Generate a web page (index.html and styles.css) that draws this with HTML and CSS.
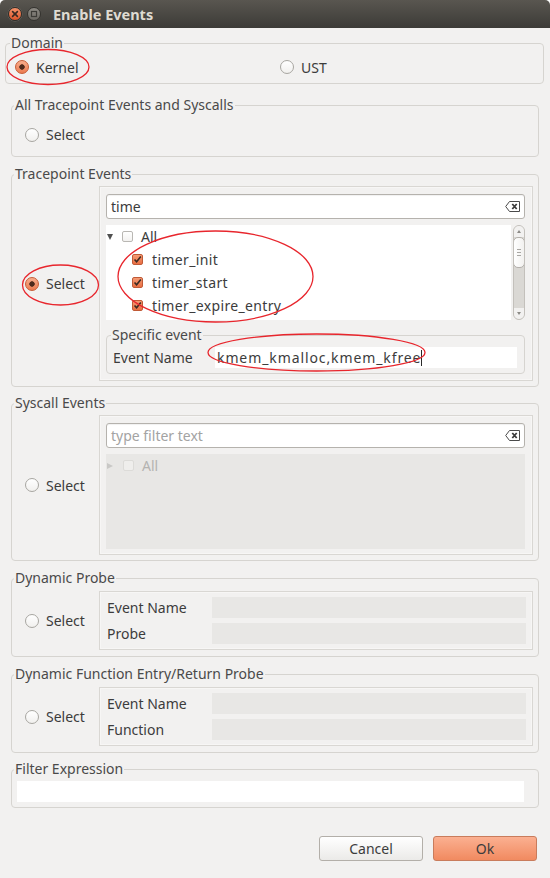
FILE: index.html
```html
<!DOCTYPE html>
<html>
<head>
<meta charset="utf-8">
<title>Enable Events</title>
<link rel="stylesheet" href="styles.css">
</head>
<body>
<div class="window">
  <div class="titlebar">
    <span class="wbtn close"><svg width="14" height="14" viewBox="0 0 14 14"><path d="M4.6 4.6 L9.4 9.4 M9.4 4.6 L4.6 9.4" stroke="#3a2a22" stroke-width="1.6" stroke-linecap="round"/></svg></span>
    <span class="wbtn max"><svg width="14" height="14" viewBox="0 0 14 14"><rect x="4.5" y="4.5" width="5" height="5" fill="none" stroke="#3c3b37" stroke-width="1.2"/></svg></span>
    <span class="title">Enable Events</span>
  </div>

  <div class="content">
    <fieldset class="group domain">
      <legend>Domain</legend>
      <div class="domain-row">
        <label class="radio"><span class="rb on"></span>Kernel</label>
        <label class="radio"><span class="rb"></span>UST</label>
      </div>
    </fieldset>

    <fieldset class="group g-all">
      <legend>All Tracepoint Events and Syscalls</legend>
      <div class="sel-row"><label class="radio"><span class="rb"></span>Select</label></div>
    </fieldset>

    <fieldset class="group g-tp">
      <legend>Tracepoint Events</legend>
      <div class="split">
        <div class="left"><label class="radio"><span class="rb on"></span>Select</label></div>
        <div class="panel tp-panel">
          <div class="search">
            <span class="stext">time</span>
            <svg class="clear" width="15" height="11" viewBox="0 0 15 11"><path d="M4.5 0.5 H14.5 V10.5 H4.5 L0.7 5.5 Z" fill="#fff" stroke="#4a4a4a"/><path d="M7.3 3 L11.7 8 M11.7 3 L7.3 8" stroke="#3c3c3c" stroke-width="1.8"/></svg>
          </div>
          <div class="treewrap">
            <div class="tree">
              <div class="row">
                <span class="tri down"></span>
                <span class="cb"></span>
                <span class="rtext">All</span>
              </div>
              <div class="row child">
                <span class="cb on"><svg width="9" height="9" viewBox="0 0 9 9"><path d="M1.5 4.5 L3.6 6.8 L7.8 1.6" fill="none" stroke="#3a2a22" stroke-width="1.6"/></svg></span>
                <span class="rtext">timer_init</span>
              </div>
              <div class="row child">
                <span class="cb on"><svg width="9" height="9" viewBox="0 0 9 9"><path d="M1.5 4.5 L3.6 6.8 L7.8 1.6" fill="none" stroke="#3a2a22" stroke-width="1.6"/></svg></span>
                <span class="rtext">timer_start</span>
              </div>
              <div class="row child">
                <span class="cb on"><svg width="9" height="9" viewBox="0 0 9 9"><path d="M1.5 4.5 L3.6 6.8 L7.8 1.6" fill="none" stroke="#3a2a22" stroke-width="1.6"/></svg></span>
                <span class="rtext">timer_expire_entry</span>
              </div>
            </div>
            <div class="scrollbar">
              <span class="sarrow up"></span>
              <span class="slider"><i></i><i></i><i></i></span>
              <span class="strough"></span>
              <span class="sarrow down"></span>
            </div>
          </div>
          <fieldset class="sub">
            <legend>Specific event</legend>
            <div class="sub-row">
              <span class="lbl">Event Name</span>
              <div class="field white"><span class="ftext">kmem_kmalloc,kmem_kfree</span><span class="caret"></span></div>
            </div>
          </fieldset>
        </div>
      </div>
    </fieldset>

    <fieldset class="group g-sys">
      <legend>Syscall Events</legend>
      <div class="split">
        <div class="left"><label class="radio"><span class="rb"></span>Select</label></div>
        <div class="panel sys-panel">
          <div class="search">
            <span class="stext ph">type filter text</span>
            <svg class="clear" width="15" height="11" viewBox="0 0 15 11"><path d="M4.5 0.5 H14.5 V10.5 H4.5 L0.7 5.5 Z" fill="#fff" stroke="#4a4a4a"/><path d="M7.3 3 L11.7 8 M11.7 3 L7.3 8" stroke="#3c3c3c" stroke-width="1.8"/></svg>
          </div>
          <div class="tree disabled">
            <div class="row">
              <span class="tri right"></span>
              <span class="cb dis"></span>
              <span class="rtext">All</span>
            </div>
          </div>
        </div>
      </div>
    </fieldset>

    <fieldset class="group g-probe">
      <legend>Dynamic Probe</legend>
      <div class="split">
        <div class="left"><label class="radio"><span class="rb"></span>Select</label></div>
        <div class="panel form-panel">
          <div class="frow"><span class="lbl">Event Name</span><div class="field grey"></div></div>
          <div class="frow"><span class="lbl">Probe</span><div class="field grey"></div></div>
        </div>
      </div>
    </fieldset>

    <fieldset class="group g-probe">
      <legend>Dynamic Function Entry/Return Probe</legend>
      <div class="split">
        <div class="left"><label class="radio"><span class="rb"></span>Select</label></div>
        <div class="panel form-panel">
          <div class="frow"><span class="lbl">Event Name</span><div class="field grey"></div></div>
          <div class="frow"><span class="lbl">Function</span><div class="field grey"></div></div>
        </div>
      </div>
    </fieldset>

    <fieldset class="group g-filter">
      <legend>Filter Expression</legend>
      <div class="filter-body"><div class="field white"></div></div>
    </fieldset>

    <div class="buttons">
      <button class="btn cancel">Cancel</button>
      <button class="btn ok">Ok</button>
    </div>
  </div>

  <svg class="marks" width="550" height="878" viewBox="0 0 550 878">
    <ellipse cx="48" cy="67" rx="41" ry="17.5" fill="none" stroke="#e8262d" stroke-width="1.3"/>
    <ellipse cx="60.5" cy="285" rx="38" ry="20" fill="none" stroke="#e8262d" stroke-width="1.3"/>
    <ellipse cx="215.5" cy="276.5" rx="97.5" ry="45.5" fill="none" stroke="#e8262d" stroke-width="1.3"/>
    <ellipse cx="316.5" cy="352.5" rx="108.5" ry="18.5" fill="none" stroke="#e8262d" stroke-width="1.3"/>
  </svg>
</div>
</body>
</html>
```

FILE: styles.css
```css
html, body {
  margin: 0;
  padding: 0;
  background: #ffffff;
}

.window {
  position: relative;
  width: 550px;
  height: 878px;
  background: #f2f1f0;
  font-family: "Noto Sans", "DejaVu Sans", sans-serif;
  font-size: 14px;
  color: #3c3c3c;
  border-radius: 5px 5px 0 0;
  overflow: hidden;
}

/* title bar */
.titlebar {
  height: 28px;
  display: flex;
  align-items: center;
  padding-left: 8px;
  background: linear-gradient(#595650, #3c3b37);
  box-sizing: border-box;
}
.wbtn {
  width: 14px;
  height: 14px;
  border-radius: 50%;
  display: block;
  box-sizing: border-box;
}
.wbtn svg { display: block; }
.close {
  background: linear-gradient(#f4926a, #dd552a);
  border: 1px solid #2f2e2a;
  box-shadow: 0 0 0 0.5px #6d6a63;
}
.close svg { margin: -1px; }
.max {
  margin-left: 5px;
  background: linear-gradient(#8d8a84, #6c6a64);
  border: 1px solid #34332f;
}
.max svg { margin: -1px; }
.title {
  margin-left: 12px;
  color: #dfdbd2;
  font-weight: bold;
  font-size: 14.5px;
  line-height: 16px;
}

/* content */
.content {
  padding-top: 7px;
}

.group {
  margin: 9px 11px 0 11px;
  padding: 0;
  border: 1px solid #d6d4d0;
  border-radius: 4px;
  min-width: 0;
}
.group > legend {
  padding: 0 1px;
  margin-left: 2px;
  line-height: 16px;
  font-size: 14px;
  color: #4a4a4a;
}
.domain {
  margin: 0 6px 0 5px;
}
.domain > legend { margin-left: 4px; }
.g-all { margin-top: 13px; }
.g-sys { margin-top: 8px; }
.g-filter { margin-top: 8px; }

/* radio */
.radio {
  display: flex;
  align-items: center;
  gap: 7px;
  white-space: nowrap;
}
.rb {
  width: 14px;
  height: 14px;
  box-sizing: border-box;
  border-radius: 50%;
  border: 1px solid #a8a6a1;
  background: linear-gradient(#ffffff, #f1f0ee);
  flex: none;
}
.rb.on {
  border-color: #c65c36;
  background: radial-gradient(circle, #4e2a1c 0 2.4px, rgba(0,0,0,0) 3px), linear-gradient(#f8ae8d, #ec7b50);
}

.domain-row {
  display: grid;
  grid-template-columns: 265px 1fr;
  align-items: center;
  height: 32px;
  padding-left: 9px;
}

.sel-row {
  height: 43px;
  display: flex;
  align-items: center;
  padding-left: 13px;
}

/* split groups */
.split {
  display: flex;
  padding: 4px 5px 5px 0;
}
.left {
  width: 87px;
  padding-left: 13px;
  box-sizing: border-box;
  display: flex;
  align-items: center;
  flex: none;
}
.panel {
  flex: 1;
  border: 1px solid #d9d7d3;
  box-shadow: inset 0 0 0 1px #f7f6f5;
  min-width: 0;
}

.tp-panel { padding: 7px 7px 6px 6px; }
.sys-panel { padding: 7px 7px 5px 6px; }

.search {
  height: 25px;
  box-sizing: border-box;
  border: 1px solid #b5b2ad;
  border-radius: 3px;
  background: #fff;
  box-shadow: inset 0 1px 1px rgba(0,0,0,0.06);
  display: flex;
  align-items: center;
  padding: 0 4px 0 4px;
}
.stext { flex: 1; color: #3c3c3c; }
.stext.ph { color: #a3a3a3; }
.clear { display: block; flex: none; }

.treewrap {
  margin-top: 6px;
  height: 95px;
  display: flex;
}
.tree {
  flex: 1;
  background: #fff;
  overflow: hidden;
}
.row {
  height: 23px;
  display: flex;
  align-items: center;
  padding-left: 1px;
}
.row.child { padding-left: 26px; }
.tri {
  width: 0;
  height: 0;
  flex: none;
}
.tri.down {
  border-left: 3.5px solid transparent;
  border-right: 3.5px solid transparent;
  border-top: 6px solid #505050;
  margin-right: 9px;
}
.tri.right {
  border-top: 3.5px solid transparent;
  border-bottom: 3.5px solid transparent;
  border-left: 6px solid #c9c8c6;
  margin-right: 10px;
}
.cb {
  width: 11px;
  height: 11px;
  box-sizing: border-box;
  border: 1px solid #b9b7b3;
  border-radius: 2px;
  background: linear-gradient(#fff, #f3f2f0);
  flex: none;
  margin-right: 8px;
  display: flex;
  align-items: center;
  justify-content: center;
}
.row.child .cb { margin-right: 9px; }
.cb.on {
  border-color: #c05a36;
  background: linear-gradient(#f49a74, #e96f43);
}
.cb.on svg { display: block; }
.cb.dis {
  border-color: #dcdbd8;
  background: #efeeec;
}
.rtext { white-space: nowrap; }
.row.child .rtext { letter-spacing: 0.35px; }

.tree.disabled {
  background: #e8e7e5;
  margin-top: 6px;
  height: 95px;
  color: #b4b3b1;
}

.scrollbar {
  width: 12px;
  margin-left: 2px;
  flex: none;
  box-sizing: border-box;
  border: 1px solid #c3c0bb;
  border-radius: 6px;
  background: #dad8d4;
  display: flex;
  flex-direction: column;
  overflow: hidden;
}
.sarrow {
  height: 11px;
  background: #f2f1f0;
  flex: none;
  display: flex;
  align-items: center;
  justify-content: center;
}
.sarrow::after {
  content: "";
  width: 0;
  height: 0;
  border-left: 2.5px solid transparent;
  border-right: 2.5px solid transparent;
}
.sarrow.up::after { border-bottom: 3px solid #8c8a86; }
.sarrow.down::after { border-top: 3px solid #8c8a86; }
.slider {
  height: 31px;
  flex: none;
  box-sizing: border-box;
  border: 1px solid #b3b0ab;
  border-radius: 5px;
  background: linear-gradient(to right, #ffffff, #f2f1ef);
  margin: 0 -1px;
  display: flex;
  flex-direction: column;
  align-items: center;
  justify-content: center;
  gap: 2px;
}
.slider i {
  display: block;
  width: 4px;
  height: 1px;
  background: #a9a7a3;
}
.strough { flex: 1; }

/* specific event */
.sub {
  margin: 7px 0 0 0;
  padding: 4px 7px 5px 6px;
  border: 1px solid #d6d4d0;
  border-radius: 4px;
  min-width: 0;
}
.sub > legend {
  padding: 0 1px;
  margin-left: -2px;
  line-height: 16px;
  color: #4a4a4a;
}
.sub-row {
  display: flex;
  align-items: center;
}
.sub-row .lbl {
  width: 102px;
  flex: none;
}
.field {
  flex: 1;
  height: 21px;
  box-sizing: border-box;
}
.field.white {
  background: #fff;
  display: flex;
  align-items: center;
  padding-left: 2px;
  white-space: nowrap;
}
.ftext { letter-spacing: 0.9px; }
.field.grey { background: #e8e7e5; }
.caret {
  display: inline-block;
  width: 1px;
  height: 16px;
  background: #2a2a2a;
  margin-left: 0;
}

/* probe groups */
.form-panel {
  padding: 5px 6px 5px 7px;
  display: flex;
  flex-direction: column;
  gap: 5px;
}
.frow {
  display: flex;
  align-items: center;
}
.frow .lbl {
  width: 105px;
  flex: none;
}
.g-probe .split { padding-top: 5px; padding-bottom: 6px; }

/* filter */
.filter-body {
  padding: 4px 14px 5px 5px;
  display: flex;
}

/* buttons */
.buttons {
  display: flex;
  justify-content: flex-end;
  gap: 10px;
  padding-right: 13px;
  margin-top: 28px;
}
.btn {
  width: 104px;
  height: 25px;
  box-sizing: border-box;
  border-radius: 3px;
  font-family: "Noto Sans", "DejaVu Sans", sans-serif;
  font-size: 14px;
  color: #3c3c3c;
  padding: 0;
}
.cancel {
  border: 1px solid #b3afa9;
  background: linear-gradient(#ffffff, #ebeae8);
}
.ok {
  border: 1px solid #c97c5c;
  background: linear-gradient(#fbb091, #f18a60);
}

.marks {
  position: absolute;
  left: 0;
  top: 0;
  pointer-events: none;
}
```
